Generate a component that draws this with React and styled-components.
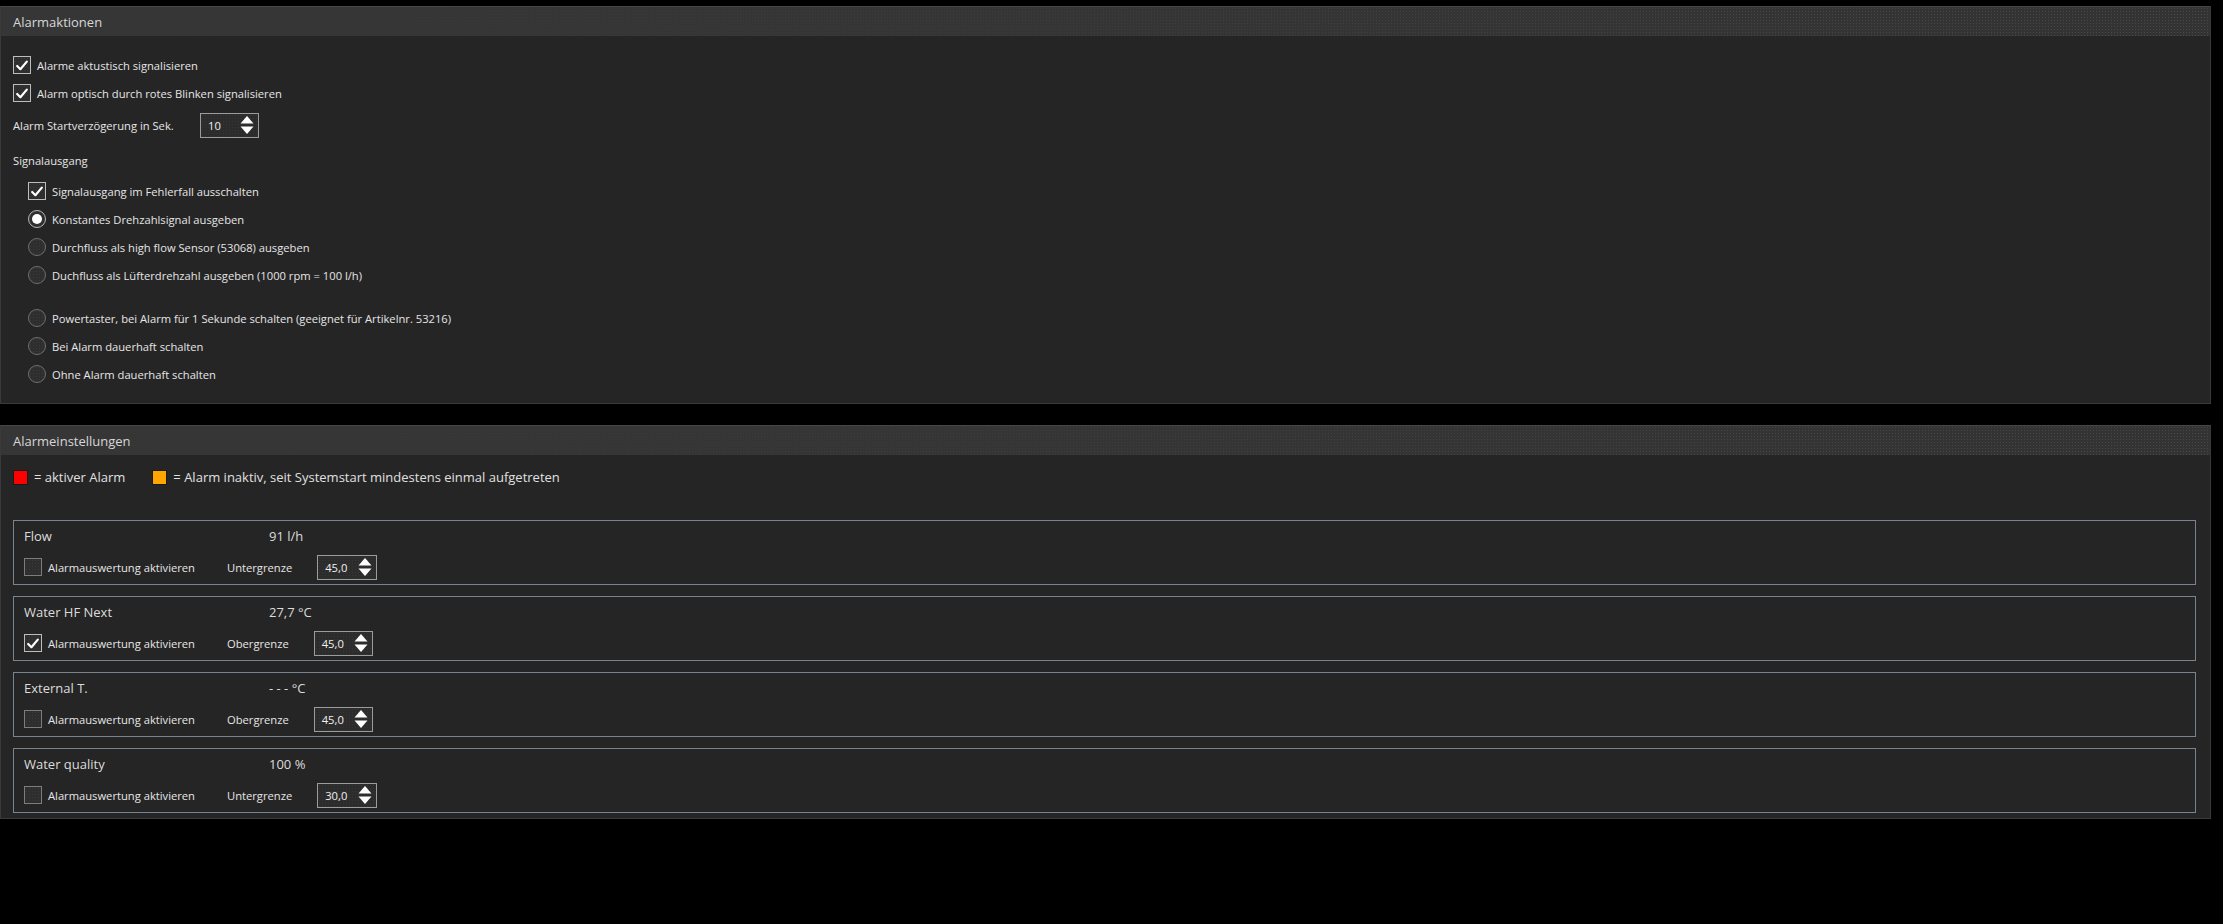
import React from 'react';
import styled, { createGlobalStyle } from 'styled-components';

const GlobalStyle = createGlobalStyle`
  html, body {
    margin: 0;
    padding: 0;
    background: #000;
  }
  body {
    font-family: 'Open Sans', 'Noto Sans', sans-serif;
    color: #e4e4e4;
  }
`;

const Page = styled.div`
  width: 2211px;
  padding-top: 6px;
  display: flex;
  flex-direction: column;
  gap: 21px;
`;

const Panel = styled.section`
  box-sizing: border-box;
  width: 100%;
  background: #252525;
  border: 1px solid #3a3a3a;
  border-top: none;
`;

const PanelHeader = styled.div`
  box-sizing: border-box;
  height: ${(p) => p.$h || 30}px;
  display: flex;
  align-items: center;
  padding-left: 12px;
  font-size: 13px;
  color: #d6d6d6;
  border-top: 1px solid #474747;
  background-color: #333;
  background-image: linear-gradient(to right, #363636 0%, rgba(54, 54, 54, 0.7) 45%, rgba(54, 54, 54, 0) 100%),
    radial-gradient(circle, #4a4a4a 0.8px, transparent 1px);
  background-size: 100% 100%, 3px 3px;
`;

const Body = styled.div`
  display: flex;
  flex-direction: column;
  padding: ${(p) => p.$pad};
`;

const Row = styled.div`
  display: flex;
  align-items: center;
  height: ${(p) => p.$h || 28}px;
  padding-left: ${(p) => p.$indent || 0}px;
  font-size: 11.2px;
  color: #e6e6e6;
  gap: 6px;
`;

const Box = styled.span`
  box-sizing: border-box;
  flex: none;
  width: 18px;
  height: 18px;
  display: inline-flex;
  align-items: center;
  justify-content: center;
  border: 1px solid ${(p) => (p.$on ? '#bdbdbd' : '#7d7d7d')};
  background-color: #2e2e2e;
  background-image: radial-gradient(circle, #3a3a3a 0.7px, transparent 1px);
  background-size: 3px 3px;
`;

const Radio = styled.span`
  box-sizing: border-box;
  flex: none;
  width: 18px;
  height: 18px;
  border-radius: 50%;
  display: inline-flex;
  align-items: center;
  justify-content: center;
  border: 1px solid ${(p) => (p.$on ? '#b8b8b8' : '#6f6f6f')};
  background-color: #2e2e2e;
  background-image: radial-gradient(circle, #3a3a3a 0.7px, transparent 1px);
  background-size: 3px 3px;
  &::after {
    content: '';
    display: ${(p) => (p.$on ? 'block' : 'none')};
    width: 10px;
    height: 10px;
    border-radius: 50%;
    background: #fff;
  }
`;

const Check = () => (
  <svg width="12" height="11" viewBox="0 0 12 11">
    <path d="M1.2 6 L4.4 9.2 L10.8 1.6" fill="none" stroke="#fff" strokeWidth="2.2" strokeLinecap="round" strokeLinejoin="round" />
  </svg>
);

const CheckBox = ({ on }) => <Box $on={on}>{on && <Check />}</Box>;

const Spin = styled.div`
  box-sizing: border-box;
  flex: none;
  width: ${(p) => p.$w || 60}px;
  height: 25px;
  display: flex;
  align-items: center;
  justify-content: space-between;
  padding: 0 4px 0 7px;
  border: 1px solid #9c9c9c;
  background-color: #2c2c2c;
  background-image: radial-gradient(circle, #363636 0.7px, transparent 1px);
  background-size: 3px 3px;
  font-size: 11.2px;
  color: #f0f0f0;
`;

const Arrows = () => (
  <svg width="14" height="20" viewBox="0 0 14 20">
    <path d="M7 1 L13.5 8.5 L0.5 8.5 Z" fill="#fff" />
    <path d="M7 19 L13.5 11.5 L0.5 11.5 Z" fill="#fff" />
  </svg>
);

const SpinBox = ({ value, w }) => (
  <Spin $w={w}>
    <span>{value}</span>
    <Arrows />
  </Spin>
);

const DelayLabel = styled.span`
  width: 181px;
`;

const Spacer = styled.div`
  height: ${(p) => p.$h}px;
`;

const Legend = styled.div`
  display: flex;
  align-items: center;
  height: 28px;
  font-size: 13px;
  color: #e0e0e0;
`;

const Swatch = styled.span`
  box-sizing: border-box;
  width: 15px;
  height: 15px;
  margin-right: 6px;
  margin-left: ${(p) => p.$ml || 0}px;
  background: ${(p) => p.$c};
  border: 1px solid #1a1a1a;
`;

const Sensors = styled.div`
  display: flex;
  flex-direction: column;
  gap: 11px;
  margin-top: 29px;
`;

const Sensor = styled.div`
  box-sizing: border-box;
  height: 65px;
  border: 1px solid #79838e;
  padding: 4px 10px 0;
  display: flex;
  flex-direction: column;
`;

const NameRow = styled.div`
  display: grid;
  grid-template-columns: 245px auto;
  align-items: center;
  height: 22px;
  font-size: 13px;
  color: #dcdcdc;
`;

const ControlRow = styled.div`
  display: flex;
  align-items: center;
  height: 30px;
  margin-top: 5px;
  font-size: 11.2px;
  color: #e6e6e6;
`;

const ActivateLabel = styled.span`
  width: 179px;
  margin-left: 6px;
`;

const LimitLabel = styled.span`
  margin-right: 25px;
`;

const sensors = [
  { name: 'Flow', value: '91 l/h', on: false, limit: 'Untergrenze', v: '45,0' },
  { name: 'Water HF Next', value: '27,7 °C', on: true, limit: 'Obergrenze', v: '45,0' },
  { name: 'External T.', value: '- - - °C', on: false, limit: 'Obergrenze', v: '45,0' },
  { name: 'Water quality', value: '100 %', on: false, limit: 'Untergrenze', v: '30,0' },
];

const radios = [
  { label: 'Konstantes Drehzahlsignal ausgeben', on: true },
  { label: 'Durchfluss als high flow Sensor (53068) ausgeben' },
  { label: 'Duchfluss als Lüfterdrehzahl ausgeben (1000 rpm = 100 l/h)' },
];

const radios2 = [
  'Powertaster, bei Alarm für 1 Sekunde schalten (geeignet für Artikelnr. 53216)',
  'Bei Alarm dauerhaft schalten',
  'Ohne Alarm dauerhaft schalten',
];

export default function App() {
  return (
    <>
      <GlobalStyle />
      <Page>
        <Panel>
          <PanelHeader>Alarmaktionen</PanelHeader>
          <Body $pad="15px 0 15px 12px">
            <Row>
              <CheckBox on />
              Alarme aktustisch signalisieren
            </Row>
            <Row>
              <CheckBox on />
              Alarm optisch durch rotes Blinken signalisieren
            </Row>
            <Row $h={36}>
              <DelayLabel>Alarm Startverzögerung in Sek.</DelayLabel>
              <SpinBox value="10" w={59} />
            </Row>
            <Row $h={34}>Signalausgang</Row>
            <Row $indent={15}>
              <CheckBox on />
              Signalausgang im Fehlerfall ausschalten
            </Row>
            {radios.map((r) => (
              <Row key={r.label} $indent={15}>
                <Radio $on={r.on} />
                {r.label}
              </Row>
            ))}
            <Spacer $h={15} />
            {radios2.map((r) => (
              <Row key={r} $indent={15}>
                <Radio />
                {r}
              </Row>
            ))}
          </Body>
        </Panel>

        <Panel>
          <PanelHeader $h={30}>Alarmeinstellungen</PanelHeader>
          <Body $pad="8px 14px 5px 12px">
            <Legend>
              <Swatch $c="#ff0000" />= aktiver Alarm
              <Swatch $c="#ffa500" $ml={27} />= Alarm inaktiv, seit Systemstart mindestens einmal aufgetreten
            </Legend>
            <Sensors>
              {sensors.map((s) => (
                <Sensor key={s.name}>
                  <NameRow>
                    <span>{s.name}</span>
                    <span>{s.value}</span>
                  </NameRow>
                  <ControlRow>
                    <CheckBox on={s.on} />
                    <ActivateLabel>Alarmauswertung aktivieren</ActivateLabel>
                    <LimitLabel>{s.limit}</LimitLabel>
                    <SpinBox value={s.v} w={s.limit === 'Obergrenze' ? 59 : 60} />
                  </ControlRow>
                </Sensor>
              ))}
            </Sensors>
          </Body>
        </Panel>
      </Page>
    </>
  );
}
